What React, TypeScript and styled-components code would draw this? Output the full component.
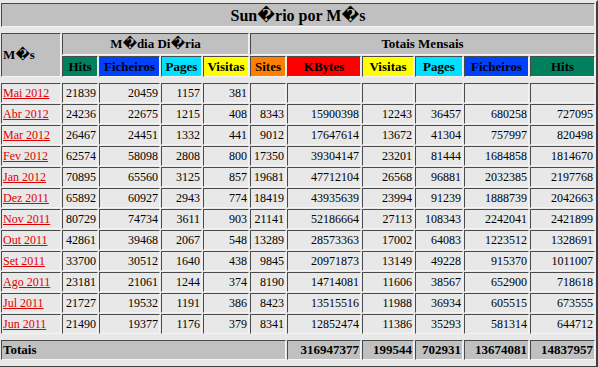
import styled, { createGlobalStyle } from "styled-components";

const GlobalStyle = createGlobalStyle`
	html, body {
		margin: 0;
		padding: 0;
		background: #e8e8e8;
	}
	body {
		font-family: "Liberation Serif", "DejaVu Serif", serif;
		color: #000;
	}
`;

const GREY = "#c0c0c0";

const Table = styled.table`
	width: 598px;
	table-layout: fixed;
	border-collapse: separate;
	border-spacing: 1px;
	border-style: solid;
	border-width: 2px 2px 2px 0;
	border-color: #e8e8e8 #404040 #404040 #e8e8e8;
	font-family: "Liberation Serif", "DejaVu Serif", serif;
`;

const Cell = styled.td`
	box-sizing: border-box;
	padding: 1px;
	border: 1px solid;
	border-color: #4a4a4a #f4f4f4 #f4f4f4 #4a4a4a;
	white-space: nowrap;
	overflow: hidden;
`;

const SpacerCell = styled.td`
	height: 4px;
	padding: 0;
	border: 0;
`;

const TitleCell = styled(Cell).attrs({ as: "th" })`
	height: 24px;
	background: ${GREY};
	font-size: 16px;
	font-weight: bold;
	text-align: center;
`;

const GroupHeader = styled(Cell).attrs({ as: "th" })<{ $align?: string; $h?: number }>`
	height: ${(p) => p.$h ?? 22}px;
	background: ${GREY};
	font-size: 13px;
	font-weight: bold;
	text-align: ${(p) => p.$align ?? "center"};
	vertical-align: middle;
`;

const ColHeader = styled(Cell).attrs({ as: "th" })<{ $bg: string }>`
	height: 21px;
	background: ${(p) => p.$bg};
	font-size: 13px;
	font-weight: bold;
	text-align: center;
`;

const DataCell = styled(Cell)`
	height: 20px;
	font-size: 12px;
	text-align: right;
`;

const MonthCell = styled(Cell)`
	height: 20px;
	font-size: 12px;
	text-align: left;
`;

const MonthLink = styled.a`
	color: #e00000;
	text-decoration: underline;
`;

const TotalLabel = styled(Cell).attrs({ as: "th" })`
	height: 20px;
	background: ${GREY};
	font-size: 13px;
	font-weight: bold;
	text-align: left;
`;

const TotalCell = styled(TotalLabel)`
	text-align: right;
`;

const widths = [60, 36, 61, 41, 46, 36, 74, 52, 48, 65, 65];

const colors = {
	hits: "#00805c",
	files: "#0040ff",
	pages: "#00e0ff",
	visits: "#ffff00",
	sites: "#ff8000",
	kbytes: "#ff0000",
};

type Row = { month: string; href: string; avg: number[]; totals: number[] | null };

const rows: Row[] = [
	{ month: "Mai 2012", href: "usage_201205.html", avg: [21839, 20459, 1157, 381], totals: null },
	{ month: "Abr 2012", href: "usage_201204.html", avg: [24236, 22675, 1215, 408], totals: [8343, 15900398, 12243, 36457, 680258, 727095] },
	{ month: "Mar 2012", href: "usage_201203.html", avg: [26467, 24451, 1332, 441], totals: [9012, 17647614, 13672, 41304, 757997, 820498] },
	{ month: "Fev 2012", href: "usage_201202.html", avg: [62574, 58098, 2808, 800], totals: [17350, 39304147, 23201, 81444, 1684858, 1814670] },
	{ month: "Jan 2012", href: "usage_201201.html", avg: [70895, 65560, 3125, 857], totals: [19681, 47712104, 26568, 96881, 2032385, 2197768] },
	{ month: "Dez 2011", href: "usage_201112.html", avg: [65892, 60927, 2943, 774], totals: [18419, 43935639, 23994, 91239, 1888739, 2042663] },
	{ month: "Nov 2011", href: "usage_201111.html", avg: [80729, 74734, 3611, 903], totals: [21141, 52186664, 27113, 108343, 2242041, 2421899] },
	{ month: "Out 2011", href: "usage_201110.html", avg: [42861, 39468, 2067, 548], totals: [13289, 28573363, 17002, 64083, 1223512, 1328691] },
	{ month: "Set 2011", href: "usage_201109.html", avg: [33700, 30512, 1640, 438], totals: [9845, 20971873, 13149, 49228, 915370, 1011007] },
	{ month: "Ago 2011", href: "usage_201108.html", avg: [23181, 21061, 1244, 374], totals: [8190, 14714081, 11606, 38567, 652900, 718618] },
	{ month: "Jul 2011", href: "usage_201107.html", avg: [21727, 19532, 1191, 386], totals: [8423, 13515516, 11988, 36934, 605515, 673555] },
	{ month: "Jun 2011", href: "usage_201106.html", avg: [21490, 19377, 1176, 379], totals: [8341, 12852474, 11386, 35293, 581314, 644712] },
];

const grandTotals = [316947377, 199544, 702931, 13674081, 14837957];

function Spacer() {
	return <tr><SpacerCell colSpan={11} /></tr>;
}

export default function App() {
	return <>
		<GlobalStyle />
		<Table>
			<colgroup>
				{widths.map((w, i) => <col key={i} style={{ width: w }} />)}
			</colgroup>
			<tbody>
				<tr><TitleCell colSpan={11}>Sun�rio por M�s</TitleCell></tr>
				<Spacer />
				<tr>
					<GroupHeader rowSpan={2} $align="left" $h={44}>M�s</GroupHeader>
					<GroupHeader colSpan={4}>M�dia Di�ria</GroupHeader>
					<GroupHeader colSpan={6}>Totais Mensais</GroupHeader>
				</tr>
				<tr>
					<ColHeader $bg={colors.hits}>Hits</ColHeader>
					<ColHeader $bg={colors.files}>Ficheiros</ColHeader>
					<ColHeader $bg={colors.pages}>Pages</ColHeader>
					<ColHeader $bg={colors.visits}>Visitas</ColHeader>
					<ColHeader $bg={colors.sites}>Sites</ColHeader>
					<ColHeader $bg={colors.kbytes}>KBytes</ColHeader>
					<ColHeader $bg={colors.visits}>Visitas</ColHeader>
					<ColHeader $bg={colors.pages}>Pages</ColHeader>
					<ColHeader $bg={colors.files}>Ficheiros</ColHeader>
					<ColHeader $bg={colors.hits}>Hits</ColHeader>
				</tr>
				<Spacer />
				{rows.map((r) => (
					<tr key={r.month}>
						<MonthCell><MonthLink href={r.href}>{r.month}</MonthLink></MonthCell>
						{r.avg.map((v, i) => <DataCell key={"a" + i}>{v}</DataCell>)}
						{(r.totals ?? [null, null, null, null, null, null]).map((v, i) => (
							<DataCell key={"t" + i}>{v ?? ""}</DataCell>
						))}
					</tr>
				))}
				<Spacer />
				<tr>
					<TotalLabel colSpan={6}>Totais</TotalLabel>
					{grandTotals.map((v, i) => <TotalCell key={i}>{v}</TotalCell>)}
				</tr>
				<Spacer />
			</tbody>
		</Table>
	</>;
}
